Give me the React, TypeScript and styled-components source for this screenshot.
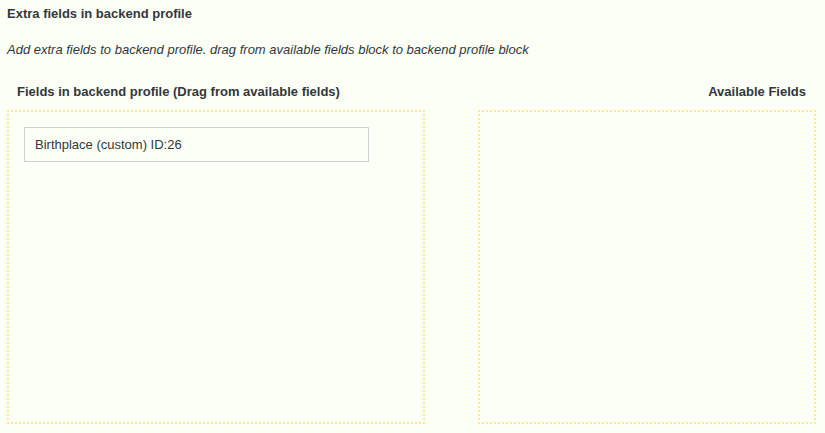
import React from 'react';
import styled, { createGlobalStyle } from 'styled-components';

const GlobalStyle = createGlobalStyle`
    html, body {
        margin: 0;
        padding: 0;
        background: #fcfff5;
    }
    body {
        font-family: "Liberation Sans", Arial, sans-serif;
        font-size: 13px;
        color: #32373c;
    }
`;

const Page = styled.div`
    padding: 6px 9px 10px 7px;
    display: flex;
    flex-direction: column;
`;

const Title = styled.h2`
    margin: 0;
    font-size: 13px;
    font-weight: bold;
    line-height: 16px;
`;

const Intro = styled.p`
    margin: 20px 0 0;
    font-style: italic;
    line-height: 16px;
`;

const Columns = styled.div`
    display: flex;
    gap: 53px;
    margin-top: 26px;
`;

const Column = styled.div<{ $width: number; $align?: 'left' | 'right' }>`
    width: ${(p) => p.$width}px;
    display: flex;
    flex-direction: column;
    text-align: ${(p) => p.$align || 'left'};
`;

const ColumnHeading = styled.h3`
    margin: 0;
    padding: 0 10px;
    font-size: 13px;
    font-weight: bold;
    line-height: 16px;
    height: 26px;
`;

const DropZone = styled.div`
    height: 314px;
    border: 2px dotted #fee98f;
    box-sizing: border-box;
    padding: 15px 15px;
    display: flex;
    flex-direction: column;
    align-items: flex-start;
    gap: 6px;
`;

const FieldItem = styled.div`
    width: 345px;
    height: 35px;
    box-sizing: border-box;
    border: 1px solid #ccd0d4;
    padding: 0 10px;
    display: flex;
    align-items: center;
    cursor: move;
`;

export default function App() {
    const profileFields = [{ name: 'Birthplace (custom)', id: 26 }];

    return (
        <Page>
            <GlobalStyle />
            <Title>Extra fields in backend profile</Title>
            <Intro>
                Add extra fields to backend profile. drag from available fields block to backend
                profile block
            </Intro>
            <Columns>
                <Column $width={418}>
                    <ColumnHeading>Fields in backend profile (Drag from available fields)</ColumnHeading>
                    <DropZone>
                        {profileFields.map((f) => (
                            <FieldItem key={f.id}>
                                {f.name} ID:{f.id}
                            </FieldItem>
                        ))}
                    </DropZone>
                </Column>
                <Column $width={338} $align="right">
                    <ColumnHeading>Available Fields</ColumnHeading>
                    <DropZone />
                </Column>
            </Columns>
        </Page>
    );
}
